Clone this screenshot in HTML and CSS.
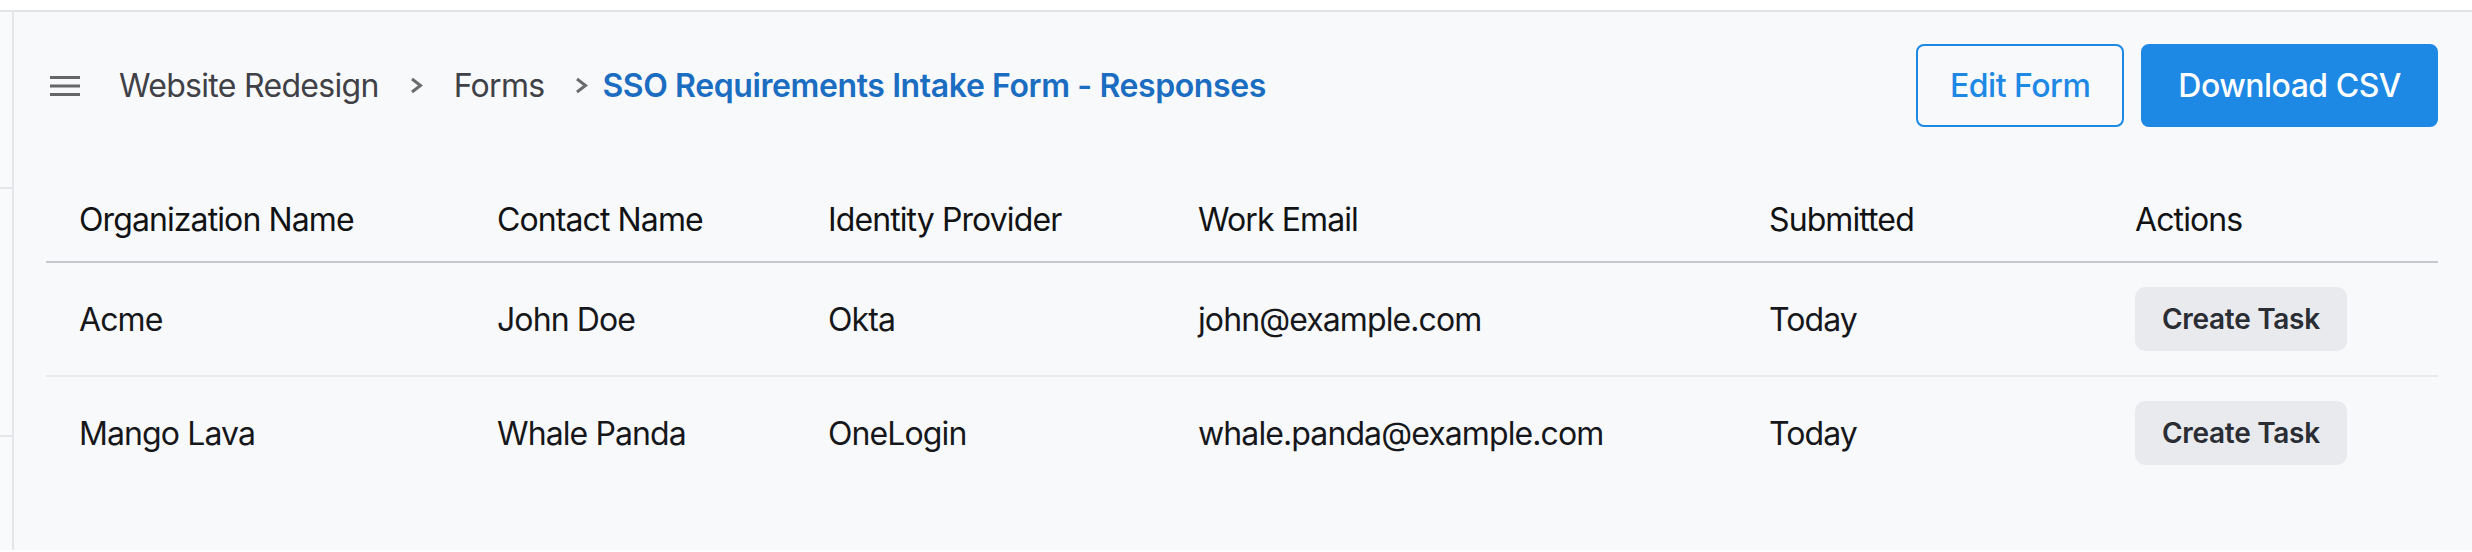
FILE: index.html
```html
<!DOCTYPE html>
<html lang="en">
<head>
  <meta charset="UTF-8" />
  <meta name="viewport" content="width=device-width, initial-scale=1.0"/>
  <title>SSO Requirements Intake Form - Responses</title>
  <link rel="stylesheet" href="styles.css">
</head>
<body>
  <div class="app">
    <div class="side">
      <div class="side-item first"></div>
      <div class="side-item"></div>
    </div>
    <main class="main">
      <div class="toolbar">
        <div class="crumbs">
          <span class="menu-btn">
            <svg width="30" height="20" viewBox="0 0 30 20"><rect x="0" y="0" width="30" height="3" fill="#666"/><rect x="0" y="8.5" width="30" height="3" fill="#666"/><rect x="0" y="17" width="30" height="3" fill="#666"/></svg>
          </span>
          <span class="crumb">Website Redesign</span>
          <span class="sep"><svg width="13" height="17" viewBox="0 0 13 17"><polyline points="2,2 10.5,8.5 2,15" fill="none" stroke="#6b6b6b" stroke-width="3"/></svg></span>
          <span class="crumb">Forms</span>
          <span class="sep last"><svg width="13" height="17" viewBox="0 0 13 17"><polyline points="2,2 10.5,8.5 2,15" fill="none" stroke="#6b6b6b" stroke-width="3"/></svg></span>
          <span class="crumb current">SSO Requirements Intake Form - Responses</span>
        </div>
        <div class="actions">
          <button class="btn btn-outline">Edit Form</button>
          <button class="btn btn-primary">Download CSV</button>
        </div>
      </div>

      <table class="responses">
        <thead>
          <tr>
            <th class="c-org">Organization Name</th>
            <th class="c-contact">Contact Name</th>
            <th class="c-idp">Identity Provider</th>
            <th class="c-email">Work Email</th>
            <th class="c-date">Submitted</th>
            <th>Actions</th>
          </tr>
        </thead>
        <tbody>
          <tr>
            <td>Acme</td>
            <td>John Doe</td>
            <td>Okta</td>
            <td>john@example.com</td>
            <td>Today</td>
            <td><button class="task-btn">Create Task</button></td>
          </tr>
          <tr>
            <td>Mango Lava</td>
            <td>Whale Panda</td>
            <td>OneLogin</td>
            <td>whale.panda@example.com</td>
            <td>Today</td>
            <td><button class="task-btn">Create Task</button></td>
          </tr>
        </tbody>
      </table>
    </main>
  </div>
</body>
</html>
```

FILE: styles.css
```css
body {margin: 0; padding: 10px 0 0 0; background: #ffffff; font-family: Inter, "Noto Sans", sans-serif; color: #16171a;}
.app {display: flex; border-top: 2px solid #e3e4e6; height: 540px; box-sizing: border-box; background: #f8f9fb;}
/* left strip */
.side {width: 12px; border-right: 2px solid #e5e6ea; background: #f9fafb;}
.side-item {height: 246px; border-bottom: 2px solid #e5e6ea;}
.side-item.first {height: 175px;}
.main {flex: 1; padding: 32px 34px 0 32px;}
/* toolbar */
.toolbar {display: flex; justify-content: space-between; align-items: center; height: 83px;}
.crumbs {display: flex; align-items: center; font-size: 32px; letter-spacing: -0.7px;}
.menu-btn {display: flex; margin-left: 4px; margin-right: 39px;}
.crumb {color: #3f4147;}
.crumb.current {color: #1b6dc1; font-weight: 600; letter-spacing: -0.4px;}
.sep {display: flex; margin: 0 31px 0 31px;}
.sep.last {margin: 0 14px 0 31px;}
.actions {display: flex; gap: 17px;}
.btn {height: 83px; padding: 0 32px; font-family: Inter, "Noto Sans", sans-serif; font-size: 32px; font-weight: 500; letter-spacing: -0.5px; border-radius: 8px; border: 2px solid #1e88e5; cursor: pointer;}
.btn-outline {background: transparent; color: #1e88e5;}
.btn-primary {background: #1e88e5; color: #ffffff; padding: 0 35px;}
/* table */
.responses {width: 100%; margin-top: 50px; border-collapse: collapse; table-layout: fixed; font-size: 32px; letter-spacing: -0.9px;}
.responses th {text-align: left; font-weight: 400; color: #111214; height: 85px; padding: 0 33px; border-bottom: 2px solid #c6c8ce; box-sizing: border-box;}
.responses td {padding: 24px 33px; color: #16171a; border-bottom: 2px solid #e8e9ec; white-space: nowrap;}
.responses tbody tr:last-child td {border-bottom: none;}
.c-org {width: 418px;}
.c-contact {width: 331px;}
.c-idp {width: 370px;}
.c-email {width: 571px;}
.c-date {width: 366px;}
.task-btn {height: 64px; padding: 0 27px; border: none; border-radius: 10px; background: #e9eaee; color: #2a2d33; font-family: Inter, "Noto Sans", sans-serif; font-size: 28px; font-weight: 600; letter-spacing: -0.3px; cursor: pointer; display: block;}
```
